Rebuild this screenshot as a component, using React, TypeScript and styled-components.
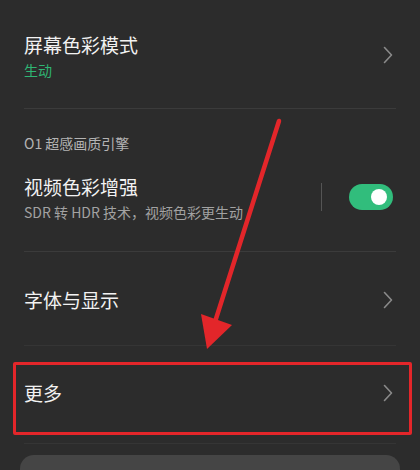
import React, { useState } from 'react';
import styled, { createGlobalStyle } from 'styled-components';

// --- Global Theme ---
const GlobalStyle = createGlobalStyle`
  :root {
    --c-bg: #2c2c2c;
    --c-divider: #3b3b3b;
    --c-text-main: #f2f2f2;
    --c-text-sub: #a2a2a2;
    --c-accent: #2fb574;
    --c-mark: #e3262a;
    --font-ui: 'Noto Sans CJK SC', 'Noto Sans', sans-serif;
  }
  html, body {
    margin: 0;
    padding: 0;
    background: var(--c-bg);
  }
`;

// --- Layout ---

const Screen = styled.div`
  position: relative;
  width: 420px;
  height: 470px;
  overflow: hidden;
  background: var(--c-bg);
  font-family: var(--font-ui);
  display: flex;
  flex-direction: column;
`;

const Row = styled.div<{ $top: number; $bottom: number }>`
  display: flex;
  align-items: center;
  padding: ${(p) => p.$top}px 27px ${(p) => p.$bottom}px 24px;
`;

const TextCol = styled.div`
  flex: 1;
  display: flex;
  flex-direction: column;
  gap: 2px;
`;

const Title = styled.div`
  font-size: 19px;
  line-height: 28px;
  color: var(--c-text-main);
`;

const Sub = styled.div<{ $accent?: boolean }>`
  font-size: 14px;
  line-height: 18px;
  color: ${(p) => (p.$accent ? 'var(--c-accent)' : 'var(--c-text-sub)')};
`;

const SectionHeader = styled.div`
  padding: 26px 24px 0;
  font-size: 14px;
  line-height: 18px;
  color: #b4b4b4;
`;

const Divider = styled.div<{ $faint?: boolean; $gap?: number }>`
  height: 1px;
  margin: ${(p) => p.$gap ?? 0}px 24px 0;
  background: ${(p) => (p.$faint ? '#353535' : 'var(--c-divider)')};
`;

const Chevron = () => (
  <svg width="10" height="18" viewBox="0 0 10 18" fill="none">
    <path
      d="M1.5 1.5 L8.5 9 L1.5 16.5"
      stroke="#8a8a8a"
      strokeWidth="1.6"
      strokeLinecap="round"
      strokeLinejoin="round"
    />
  </svg>
);

// --- Switch ---

const VSep = styled.div`
  width: 1px;
  height: 28px;
  background: #555;
  margin-right: 27px;
`;

const SwitchTrack = styled.button<{ $on: boolean }>`
  width: 44px;
  height: 26px;
  border: none;
  padding: 0;
  border-radius: 13px;
  background: ${(p) => (p.$on ? '#31bd7c' : '#555')};
  position: relative;
  cursor: pointer;

  &::after {
    content: '';
    position: absolute;
    top: 5px;
    left: ${(p) => (p.$on ? '22px' : '5px')};
    width: 16px;
    height: 16px;
    border-radius: 50%;
    background: #fff;
  }
`;

// --- Highlight (annotation) ---

const Highlight = styled.div`
  margin: 17px 8px 0 13px;
  border: 3px solid var(--c-mark);
  border-radius: 2px;
  display: flex;
  align-items: center;
  padding: 14px 16px 25px 8px;
`;

const HighlightTitle = styled(Title)`
  flex: 1;
`;

const BottomCard = styled.div`
  margin: 12px 20px 0;
  height: 40px;
  border-radius: 14px 14px 0 0;
  background: #454545;
`;

const Annotation = styled.svg`
  position: absolute;
  inset: 0;
  pointer-events: none;
`;

// --- Main Component ---

const App = () => {
  const [hdr, setHdr] = useState(true);

  return (
    <>
      <GlobalStyle />
      <Screen>
        <Row $top={31} $bottom={29}>
          <TextCol>
            <Title>屏幕色彩模式</Title>
            <Sub $accent>生动</Sub>
          </TextCol>
          <Chevron />
        </Row>
        <Divider />

        <SectionHeader>O1 超感画质引擎</SectionHeader>
        <Row $top={21} $bottom={30}>
          <TextCol>
            <Title>视频色彩增强</Title>
            <Sub>SDR 转 HDR 技术，视频色彩更生动</Sub>
          </TextCol>
          <VSep />
          <SwitchTrack $on={hdr} onClick={() => setHdr(!hdr)} />
        </Row>
        <Divider />

        <Row $top={34} $bottom={31}>
          <TextCol>
            <Title>字体与显示</Title>
          </TextCol>
          <Chevron />
        </Row>
        <Divider $faint />

        <Highlight>
          <HighlightTitle>更多</HighlightTitle>
          <Chevron />
        </Highlight>
        <Divider $faint $gap={8} />
        <BottomCard />

        {/* red arrow annotation */}
        <Annotation width="420" height="470" viewBox="0 0 420 470">
          <line
            x1="279"
            y1="121"
            x2="214"
            y2="325"
            stroke="#e3262a"
            strokeWidth="4.5"
            strokeLinecap="round"
          />
          <polygon points="201,314 232,325 207,349" fill="#e3262a" />
        </Annotation>
      </Screen>
    </>
  );
};

export default App;
